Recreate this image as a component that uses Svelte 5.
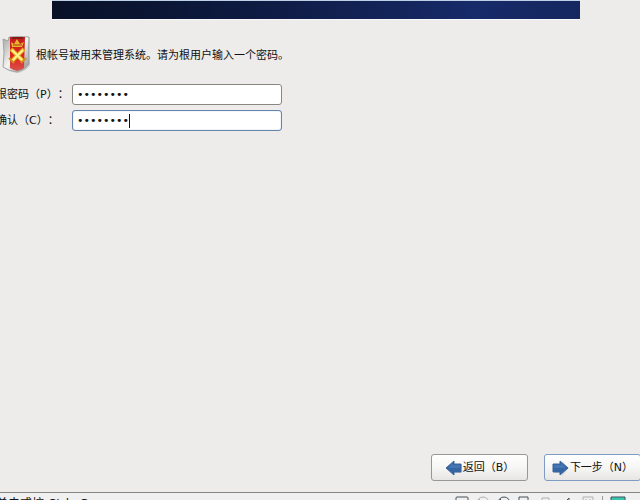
<script lang="ts">
  let password = $state('password');
  let confirmation = $state('password');
</script>

<div class="viewer">
  <header class="banner"></header>

  <main>
    <div class="intro">
      <svg class="shield" width="32" height="38" viewBox="0 0 32 38" aria-hidden="true">
        <defs>
          <linearGradient id="silver" x1="0" x2="1" y1="0" y2="1">
            <stop offset="0" stop-color="#a5a5a3" />
            <stop offset="0.5" stop-color="#f4f4f2" />
            <stop offset="1" stop-color="#858a8d" />
          </linearGradient>
          <linearGradient id="red" x1="0" x2="0" y1="0" y2="1">
            <stop offset="0" stop-color="#c51c1a" />
            <stop offset="0.6" stop-color="#e02720" />
            <stop offset="1" stop-color="#d6534b" />
          </linearGradient>
        </defs>
        <path d="M4 3 9 5V1H30V29Q26 35 18 37Q9 36 4 31Z" fill="#777" opacity="0.3" />
        <path d="M3 3 8 5 9 1Q18 0 29 1Q28 15 29 28Q25 34 17 36Q8 35 3 31Q5 17 3 3Z" fill="url(#silver)" stroke="#a2a5a5" />
        <path d="M10 1H25L24 32Q21 34 17 35Q13 34 10 32Z" fill="url(#red)" />
        <path d="M12 1H23V3H12Z" fill="#861b16" />
        <path d="M11 6 14 8 17 3 20 8 24 6 22 11H12Z" fill="#e9b52e" />
        <path d="M13 9H22" stroke="#b53817" />
        <path d="M11 13 23 25M24 13 12 25" stroke="#e7ae20" stroke-width="4" />
        <path d="M12 14 23 25M23 14 12 25" stroke="#fff28b" stroke-width="2" />
        <path d="M9 22 14 27M26 22 21 27" stroke="#d98b1c" stroke-width="2" />
      </svg>
      <p>根帐号被用来管理系统。请为根用户输入一个密码。</p>
    </div>

    <form id="root-password" onsubmit={(e) => e.preventDefault()}>
      <label for="password">根密码（P）：</label>
      <div class="field">
        <input id="password" type="password" bind:value={password} />
      </div>
      <label for="confirm">确认（C）：</label>
      <div class="field active">
        <input id="confirm" type="password" bind:value={confirmation} />
        <span class="caret"></span>
      </div>
    </form>
  </main>

  <nav>
    <button type="button">
      <svg width="18" height="18" viewBox="0 0 18 18" aria-hidden="true">
        <path d="M2 9 9 2V5H17V14H9V17Z" fill="#777" opacity="0.2" />
        <path d="M1 9 9 2V5H16V13H9V16Z" fill="#3465a4" stroke="#3d659a" />
        <path d="M3 9 8 4V6H15V9Z" fill="#6192c9" opacity="0.4" />
      </svg>
      返回（B）
    </button>
    <button type="submit" form="root-password" class="default">
      <svg width="18" height="18" viewBox="0 0 18 18" aria-hidden="true">
        <path d="M17 9 10 2V5H3V14H10V17Z" fill="#777" opacity="0.2" />
        <path d="M16 9 8 2V5H1V13H8V16Z" fill="#3465a4" stroke="#3d659a" />
        <path d="M14 9 9 4V6H2V9Z" fill="#6192c9" opacity="0.4" />
      </svg>
      下一步（N）
    </button>
  </nav>

  <footer>
    <span class="hint">单击或按 Ctrl+G。</span>
    <div class="devices">
      <svg width="14" height="14" viewBox="0 0 14 14"><path d="M1 9V2Q1 1 2 1H12Q13 1 13 2V9Z" /></svg>
      <svg class="off" width="14" height="14" viewBox="0 0 14 14"><circle cx="7" cy="7" r="6" /><circle cx="7" cy="7" r="2" /><path d="M3 3 6 6" /></svg>
      <svg width="14" height="14" viewBox="0 0 14 14"><circle cx="7" cy="7" r="6" /><circle cx="7" cy="7" r="2" /><path d="M3 3 6 6" /></svg>
      <svg width="14" height="14" viewBox="0 0 14 14"><path d="M1 6V1H10V6M1 6H13V12H1Z" /></svg>
      <svg class="off" width="14" height="14" viewBox="0 0 14 14"><path d="M3 5V2H10V12H3V5" /></svg>
      <svg width="14" height="14" viewBox="0 0 14 14"><path d="M2 6H5L9 2V13L5 9H2Z" /></svg>
      <svg class="off" width="14" height="14" viewBox="0 0 14 14"><path d="M2 1H12V12H2ZM5 3V6M9 3V6" /></svg>
      <span class="divider"></span>
      <svg class="message" width="16" height="14" viewBox="0 0 16 14"><path d="M1 1H15V11H1Z" /></svg>
    </div>
  </footer>
</div>

<style>
  :global(body) {
    margin: 0;
  }

  .viewer {
    display: flex;
    flex-direction: column;
    height: 100vh;
    overflow: hidden;
    background: #edecea;
    color: #111;
    font: 11px/16px "DejaVu Sans", "Noto Sans CJK SC", sans-serif;
    text-spacing-trim: space-all;
  }

  .banner {
    flex: none;
    height: 18px;
    margin: 0 60px 0 52px;
    border-top: 1px solid #bdd0e6;
    border-bottom: 1px solid #f8f8fb;
    background: linear-gradient(100deg, #081126, #0e1b43 40%, #172a69 80%, #14275e);
  }

  main {
    flex: 1;
    padding-top: 16px;
  }

  .intro {
    display: flex;
    align-items: center;
    gap: 4px;
  }

  .intro p {
    margin: 0;
    padding-top: 2px;
  }

  /* The dialog runs past the left edge of the viewer */
  form {
    display: grid;
    grid-template-columns: 76px 210px;
    row-gap: 5px;
    align-items: center;
    margin: 10px 0 0 -4px;
  }

  label {
    padding-top: 1px;
    white-space: nowrap;
  }

  .field {
    position: relative;
    display: flex;
  }

  input {
    box-sizing: border-box;
    width: 100%;
    height: 21px;
    padding: 0 4px;
    border: 1px solid #89867f;
    border-radius: 3px;
    background: #fff;
    color: #111;
    font: 11px/16px "DejaVu Sans", sans-serif;
    outline: none;
  }

  .active input {
    border-color: #6685ac;
    box-shadow: inset 0 0 1px #7b9ac1;
  }

  .caret {
    position: absolute;
    top: 4px;
    left: 57px;
    width: 1px;
    height: 14px;
    background: #111;
  }

  nav {
    display: flex;
    flex: none;
    justify-content: flex-end;
    gap: 16px;
    margin: 0 -1px 11px 0;
  }

  button {
    display: flex;
    align-items: center;
    justify-content: center;
    box-sizing: border-box;
    width: 97px;
    height: 27px;
    padding: 0;
    border: 1px solid #999791;
    border-radius: 3px;
    background: linear-gradient(#fff, #f6f6f5 50%, #e7e6e4);
    color: #111;
    font: inherit;
    white-space: nowrap;
  }

  button.default {
    border-color: #7e9cc2;
  }

  /* Only the top of the status bar fits in the viewer */
  footer {
    display: flex;
    flex: none;
    align-items: flex-start;
    justify-content: space-between;
    box-sizing: border-box;
    height: 8px;
    padding: 3px 14px 0 0;
    overflow: hidden;
    border-top: 1px solid #858585;
    background: #f0f0f0;
  }

  .hint {
    margin-left: -4px;
    font: 12px/16px "DejaVu Sans", "Noto Sans CJK SC", sans-serif;
    white-space: nowrap;
  }

  .devices {
    display: flex;
    gap: 7px;
  }

  .devices svg {
    flex: none;
    fill: none;
    stroke: #46505a;
  }

  .devices .off {
    stroke: #b0b0b0;
  }

  .devices .message {
    fill: #35c8b0;
  }

  .divider {
    width: 1px;
    height: 14px;
    background: #999;
  }
</style>
